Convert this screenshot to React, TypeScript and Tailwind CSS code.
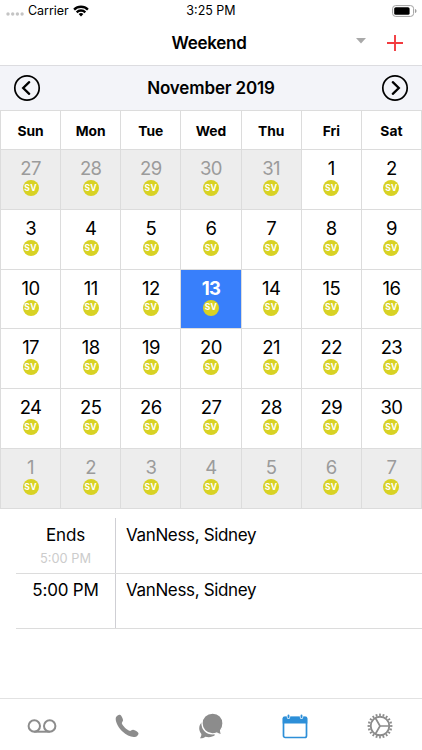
import React from 'react';

const weekdays = ['Sun', 'Mon', 'Tue', 'Wed', 'Thu', 'Fri', 'Sat'];

// 27 Oct - 7 Dec, six full weeks
const days = [
  ...[27, 28, 29, 30, 31].map((day) => ({ day, muted: true })),
  ...Array.from({ length: 30 }, (_, i) => ({ day: i + 1, muted: false })),
  ...Array.from({ length: 7 }, (_, i) => ({ day: i + 1, muted: true })),
];

const agenda = [
  { time: 'Ends', sub: '5:00 PM', name: 'VanNess, Sidney' },
  { time: '5:00 PM', sub: '', name: 'VanNess, Sidney' },
];

const StatusBar = () => (
  <div className="grid h-5 grid-cols-3 items-center text-[12.5px] leading-5">
    <div className="flex items-center pl-[6px]">
      <svg width="19" height="6" viewBox="0 0 19 6" className="mt-[7px]" fill="#c4c4c4">
        <circle cx="2" cy="3" r="1.7" />
        <circle cx="6.7" cy="3" r="1.7" />
        <circle cx="11.4" cy="3" r="1.7" />
        <circle cx="16.1" cy="3" r="1.7" />
      </svg>
      <span className="ml-[3px] pt-px tracking-[-0.05px]">Carrier</span>
      <svg width="16" height="12" viewBox="0 0 16 12" className="ml-[4px]" fill="none" stroke="#000" strokeWidth="2.4">
        <path d="M1.1 4.6a9.8 9.8 0 0 1 13.8 0" />
        <path d="M3.7 7.3a6.1 6.1 0 0 1 8.6 0" />
        <path d="M8 11.6 5.6 9.1a3.4 3.4 0 0 1 4.8 0z" fill="#000" stroke="none" />
      </svg>
    </div>
    <div className="pt-px text-center">3:25 PM</div>
    <div className="flex justify-end pr-[5px]">
      <svg width="25" height="12" viewBox="0 0 25 12">
        <rect x="0.6" y="0.6" width="21" height="10.8" rx="3" fill="none" stroke="#a0a0a0" strokeWidth="1" />
        <rect x="2.2" y="2.2" width="15.4" height="7.6" rx="1.6" fill="#000" />
        <path d="M23 4v4c1-.3 1.5-1 1.5-2S24 4.3 23 4z" fill="#a0a0a0" />
      </svg>
    </div>
  </div>
);

const NavBar = () => (
  <div className="grid h-[46px] grid-cols-[1fr_auto_1fr] items-center border-b border-[#dcdce0]">
    <div />
    <h1 className="pt-[2px] pr-[4px] text-[17px] font-semibold tracking-[-0.25px]">Weekend</h1>
    <div className="flex items-center justify-end pt-px pr-[19px]">
      <svg width="10" height="6" viewBox="0 0 10 6" className="mr-[21px] mb-[5px]">
        <path d="M0 0h10L5 5.5z" fill="#a9a9a9" />
      </svg>
      <svg width="16" height="16" viewBox="0 0 16 16" stroke="#f23b3f" strokeWidth="1.9">
        <path d="M8 0v16M0 8h16" />
      </svg>
    </div>
  </div>
);

const ArrowButton = ({ flip = false }: { flip?: boolean }) => (
  <button type="button" className={flip ? 'rotate-180' : ''}>
    <svg width="28" height="28" viewBox="0 0 28 28" className="block" fill="none" stroke="#000">
      <circle cx="14" cy="14" r="12.2" strokeWidth="1.7" />
      <path d="M16.2 8.2 10.2 14l6 5.8" strokeWidth="2.3" strokeLinecap="round" />
    </svg>
  </button>
);

const Badge = () => (
  <span className="flex h-4 w-4 items-center justify-center rounded-full bg-[#d8d224] text-[8.5px] leading-none font-bold tracking-[0.3px] text-white">
    SV
  </span>
);

const Calendar = () => (
  <div className="border-t border-l border-[#dcdcdc]">
    <div className="grid h-[39px] grid-cols-7">
      {weekdays.map((d) => (
        <div key={d} className="flex items-center justify-center border-r border-b border-[#dcdcdc] pt-[2px] text-[13.8px] font-bold">
          {d}
        </div>
      ))}
    </div>
    <div className="grid h-[359px] grid-cols-7 grid-rows-6">
      {days.map(({ day, muted }, i) => {
        const selected = day === 13;
        const tone = selected
          ? 'bg-[#387ffb] text-white font-bold'
          : muted
            ? 'bg-[#ededed] text-[#9b9b9b]'
            : 'bg-white text-black';
        return (
          <div key={i} className={`flex flex-col items-center border-r border-b border-[#dcdcdc] pt-[7px] ${tone}`}>
            <span className="text-[18.5px] leading-[23px] tracking-[-0.6px]">{day}</span>
            <Badge />
          </div>
        );
      })}
    </div>
  </div>
);

const Agenda = () => (
  <div className="mt-[9px] pl-4">
    {agenda.map((item) => (
      <div key={item.time} className="flex h-[55.5px] border-b border-[#dcdcdc]">
        <div className="flex w-[100px] flex-col items-center border-r border-[#cfcfd4] pt-[4.5px]">
          <span className="text-[17px] leading-6 tracking-[-0.2px]">{item.time}</span>
          <span className="text-[12.8px] leading-6 text-[#cccccc]">{item.sub}</span>
        </div>
        <div className="pt-[4.5px] pl-[10px] text-[17px] leading-6 tracking-[-0.35px]">{item.name}</div>
      </div>
    ))}
  </div>
);

const TabBar = () => (
  <nav className="mt-auto grid h-[52px] grid-cols-5 place-items-center border-t border-[#e2e2e2] pt-[3px] text-[#8c8c8c]">
    <svg width="30" height="14" viewBox="0 0 30 14" fill="none" stroke="currentColor" strokeWidth="2">
      <circle cx="7.3" cy="7" r="5.7" />
      <circle cx="22.7" cy="7" r="5.7" />
      <path d="M7.3 12.7h15.4" />
    </svg>
    <svg width="24" height="24" viewBox="0 0 24 24" fill="currentColor">
      <path d="M1 3.2C2 1.5 3.8.4 5 .8c1.4.6 2.8 3.400 3 5.200.1 1.500-1.500 2.200-1.100 3.400.8 2.300 4.900 6.300 7.500 7.400 1.500.5 2.300-1.200 3.800-1 1.800.3 4.600 1.900 5.200 3.100.4 1.200-.8 3-2.500 3.800-3.400 1.400-9.300-1.100-13.400-5.100S-.4 6.600 1 3.200z" />
    </svg>
    <svg width="28" height="28" viewBox="0 0 28 28" fill="currentColor">
      <path d="M7 8.5C3.8 10.5 2.2 13.2 2.2 16.3c0 2.2.8 4.200 2.200 5.700 0 1.700-.5 3-1.400 4.200 2.200.1 3.900-.4 5.300-1.500 3.700.9 7.200.4 9.700-1.700z" />
      <path d="M15.700 1C21.800 1 26 5.700 26 11.300c0 3-1 5.400-2.400 7.100 0 1.600.5 2.900 1.500 4.200-2.300.1-4-.5-5.400-1.600-1.200.5-2.600.8-4.200.8-6.100 0-10.500-4.800-10.500-10.500S9.400 1 15.700 1z" stroke="#fff" strokeWidth="1.3" />
    </svg>
    <svg width="26" height="25" viewBox="0 0 26 25" fill="none">
      <rect x="1.5" y="3.5" width="23" height="20" rx="1.7" stroke="#2d8fd8" strokeWidth="1.7" />
      <path d="M.7 9.5V4.3C.7 3.2 1.5 2.6 2.5 2.6h21c1 0 1.8.6 1.8 1.7v5.2z" fill="#2d8fd8" />
      <path d="M6.5 1.5v1.8M19.5 1.5v1.8" stroke="#fff" strokeWidth="3.4" strokeLinecap="round" />
      <path d="M6.5 1.5v1.7M19.5 1.5v1.7" stroke="#2d8fd8" strokeWidth="1.9" strokeLinecap="round" />
    </svg>
    <svg width="26" height="26" viewBox="0 0 26 26" fill="none" stroke="currentColor">
      <circle cx="13" cy="13" r="11.2" strokeWidth="2.4" pathLength="80" strokeDasharray="2 2" strokeDashoffset="1" />
      <circle cx="13" cy="13" r="9.3" strokeWidth="1.9" />
      <path d="M13 13h9.2M13 13 8.4 5M13 13 8.4 21" strokeWidth="1.7" />
    </svg>
  </nav>
);

const App = () => {
  return (
    <div className="flex h-screen w-full flex-col overflow-hidden bg-white font-[Inter,'Liberation_Sans',sans-serif] text-black">
      <StatusBar />
      <NavBar />
      <div className="flex h-11 shrink-0 items-center justify-between bg-[#f3f4f9] px-[13px]">
        <ArrowButton />
        <h2 className="pt-px text-[17px] font-semibold tracking-[-0.15px]">November 2019</h2>
        <ArrowButton flip />
      </div>
      <Calendar />
      <Agenda />
      <TabBar />
    </div>
  );
};

export default App;
